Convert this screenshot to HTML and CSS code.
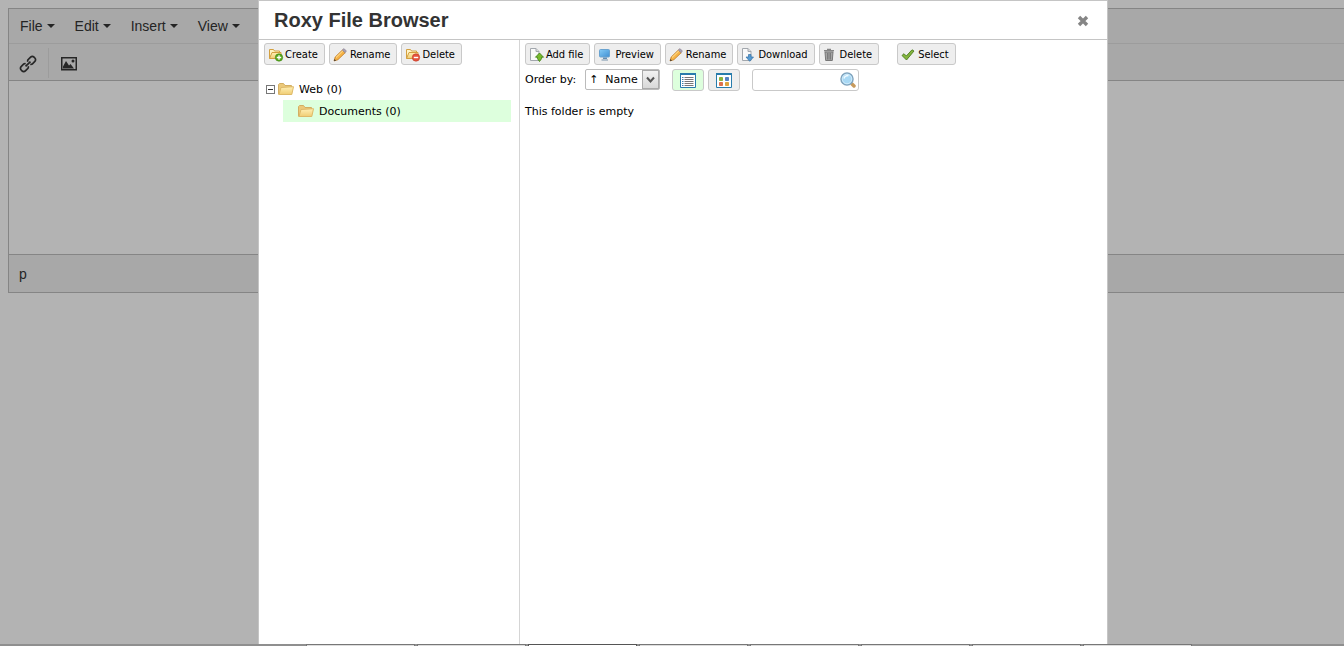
FILE: index.html
```html
<!DOCTYPE html>
<html lang="en">
<head>
<meta charset="utf-8">
<title>Roxy File Browser</title>
<link rel="stylesheet" href="styles.css">
</head>
<body>
<svg class="defs" aria-hidden="true">
  <defs>
    <linearGradient id="gold" x1="0" y1="0" x2="0" y2="1"><stop offset="0" stop-color="#fff0b5"/><stop offset="1" stop-color="#f0cd74"/></linearGradient>
    <linearGradient id="screen" x1="0" y1="0" x2="1" y2="1"><stop offset="0" stop-color="#84cbf6"/><stop offset="1" stop-color="#3f8fd3"/></linearGradient>
    <symbol id="folder-small" viewBox="0 0 16 16">
      <path d="M1.500 11.500V2.500h4l1 1.500h5v2" fill="#fff3c4" stroke="#d3a040"/>
      <path d="M1.500 11.500l2.500-6h9v6z" fill="url(#gold)" stroke="#d3a040"/>
    </symbol>
    <symbol id="folder-open" viewBox="0 0 16 14">
      <path d="M.5 12.500V2.500l1-1h4l1.500 2h6.500v3" fill="#ecc979" stroke="#d3ae62"/>
      <path d="M1 12.500l2-7 12.500-.8-1.700 7.800z" fill="url(#gold)" stroke="#deb968"/>
    </symbol>
    <symbol id="pencil" viewBox="0 0 14 14">
      <path d="M1 13l1.200-4L9.400 2l2.800 2.700-7.300 7z" fill="#f7b447" stroke="#bd7925" stroke-width=".8"/>
      <path d="M3 9.500l7-6.800" stroke="#ffe49b" stroke-width="1"/>
      <path d="M9.400 2L11 .6l2.400 2.400-1.200 1.700z" fill="#a9a2b8" stroke="#85788a" stroke-width=".6"/>
      <path d="M1 13l.6-2 1.400 1.400z" fill="#333"/>
    </symbol>
    <symbol id="page" viewBox="0 0 14 14">
      <path d="M1.500.5h5.500l3 3v9H1.500z" fill="#fafafa" stroke="#a2a7ad"/>
      <path d="M7 .5v3h3" fill="#ddd" stroke="#a2a7ad"/>
    </symbol>
  </defs>
</svg>

<main class="editor">
  <nav class="menubar">
    <button class="menu" type="button">File<span class="caret"></span></button>
    <button class="menu" type="button">Edit<span class="caret"></span></button>
    <button class="menu" type="button">Insert<span class="caret"></span></button>
    <button class="menu" type="button">View<span class="caret"></span></button>
  </nav>
  <div class="toolbar">
    <button class="tool" type="button" aria-label="Insert link">
      <svg width="18" height="18" viewBox="0 0 18 18" fill="none" stroke="#262626" stroke-width="1.700">
        <g transform="rotate(-45 9 9)"><path d="M7.500 7.200A2.300 2.300 0 0 0 6 6H2.300a2.400 2.400 0 0 0-2.400 2.400v1.200A2.400 2.400 0 0 0 2.300 12H6a2.300 2.300 0 0 0 1.500-1.200M10.500 7.200A2.300 2.300 0 0 1 12 6h3.700a2.400 2.400 0 0 1 2.400 2.400v1.200a2.400 2.400 0 0 1-2.400 2.400H12a2.300 2.300 0 0 1-1.500-1.200M5.500 9h7"/></g>
      </svg>
    </button>
    <button class="tool tool-split" type="button" aria-label="Insert image">
      <svg width="16" height="14" viewBox="0 0 16 14"><rect x=".75" y=".75" width="14.500" height="12" fill="none" stroke="#262626" stroke-width="1.500"/><path d="M2 11.500V9.500L5 4l3 4.500L9.500 7 13 11.500z" fill="#262626"/><circle cx="12" cy="4" r="1.500" fill="#262626"/></svg>
    </button>
  </div>
  <div class="canvas"></div>
  <div class="status">p</div>
</main>

<div class="overlay">
  <section class="dialog" role="dialog" aria-labelledby="dialog-title">
    <header class="dialog-head">
      <h1 id="dialog-title">Roxy File Browser</h1>
      <button class="close" type="button" aria-label="Close">
        <svg width="12" height="12" viewBox="0 0 12 12"><path d="M2 2l8 8M10 2l-8 8" stroke="#858585" stroke-width="3.400"/></svg>
      </button>
    </header>
    <div class="dialog-body">
      <aside class="folders">
        <div class="actions">
          <button class="btn" type="button"><svg width="16" height="16"><use href="#folder-small"/><circle cx="11" cy="10.500" r="3.700" fill="#58a71e" stroke="#3d8510" stroke-width=".6"/><path d="M11 8.300v4.400M8.800 10.500h4.400" stroke="#fff" stroke-width="1.300"/></svg>Create</button>
          <button class="btn btn-mid" type="button"><svg width="14" height="14"><use href="#pencil"/></svg>Rename</button>
          <button class="btn" type="button"><svg width="16" height="16"><use href="#folder-small"/><circle cx="11" cy="10.500" r="3.700" fill="#e6553d" stroke="#be3827" stroke-width=".6"/><path d="M8.800 10.500h4.400" stroke="#fff" stroke-width="1.400"/></svg>Delete</button>
        </div>
        <ul class="tree">
          <li>
            <div class="node">
              <button class="toggle" type="button" aria-label="Collapse Web"></button>
              <svg width="16" height="14"><use href="#folder-open"/></svg><span>Web (0)</span>
            </div>
            <ul class="branch">
              <li><div class="node node-child selected"><svg width="16" height="14"><use href="#folder-open"/></svg><span>Documents (0)</span></div></li>
            </ul>
          </li>
        </ul>
      </aside>
      <section class="files">
        <div class="actions">
          <button class="btn" type="button"><svg width="16" height="14"><use href="#page" width="14" height="14"/><path d="M10.500 5l4 4.200h-2v1.500l-2 2.800-2-2.800V9.200h-2z" fill="#79bb2c" stroke="#43831a" stroke-width=".9"/></svg>Add file</button>
          <button class="btn btn-mid" type="button"><svg width="14" height="14" viewBox="0 0 14 14"><rect x="1.500" y="1.500" width="10" height="7.500" rx="1" fill="url(#screen)" stroke="#6aa3d0"/><path d="M5 9.500h4v1.500H5z" fill="#648eb3"/><path d="M3.500 12h6.500" stroke="#9eb0c1" stroke-width="1.500"/></svg>Preview</button>
          <button class="btn btn-mid" type="button"><svg width="14" height="14"><use href="#pencil"/></svg>Rename</button>
          <button class="btn btn-mid" type="button"><svg width="14" height="14" viewBox="0 0 14 14"><use href="#page"/><path d="M7.500 6.500H10V9h2.500l-3.800 4.300L5 9h2.500z" fill="#559bd2" stroke="#3470a6" stroke-width=".7"/></svg>Download</button>
          <button class="btn btn-mid" type="button"><svg width="14" height="14" viewBox="0 0 14 14"><path d="M2 4h8l-.7 8.500H2.700z" fill="#a5a5a5" stroke="#777"/><path d="M1 2.800h10M4 1.500h4" stroke="#858585" stroke-width="1.400"/><path d="M4.500 5v6.500M6 5v6.500M7.500 5v6.500" stroke="#686868" stroke-width=".7"/></svg>Delete</button>
          <button class="btn btn-mid btn-last" type="button"><svg width="14" height="14" viewBox="0 0 14 14"><path d="M1 7.500l2-1.800L5.300 8 11 1.800 13 3 5.500 12z" fill="#83b43d" stroke="#4c7d20" stroke-width=".9"/></svg>Select</button>
        </div>
        <div class="filters">
          <label for="order">Order by:</label>
          <span class="picker">
            <select id="order"><option>↑&nbsp; Name</option><option>↓&nbsp; Name</option></select>
            <span class="drop"><svg width="9" height="8" viewBox="0 0 9 8"><path d="M1 1.500l3.500 4 3.500-4" fill="none" stroke="#555" stroke-width="2"/></svg></span>
          </span>
          <button class="btn view active" type="button" aria-label="List view"><svg width="16" height="15" viewBox="0 0 16 15"><path d="M.5.500h15v14H.5z" fill="#fff" stroke="#277cac"/><path d="M0 1h16" stroke="#277cac" stroke-width="2"/><path d="M2 4.500h1.500M2 6.500h1.500M2 8.500h1.500M2 10.500h1.500M2 12.500h1.500" stroke="#3b83ac"/><path d="M4.500 4.500h9M4.500 6.500h9M4.500 8.500h9M4.500 10.500h9M4.500 12.500h9" stroke="#777"/></svg></button>
          <button class="btn view" type="button" aria-label="Thumbnail view"><svg width="16" height="15" viewBox="0 0 16 15"><path d="M.5.500h15v14H.5z" fill="#fff" stroke="#277cac"/><path d="M0 1h16" stroke="#277cac" stroke-width="2"/><rect x="3" y="4" width="4" height="4" rx=".8" fill="#8bb33d"/><rect x="9" y="4" width="4" height="4" rx=".8" fill="#5581c1"/><rect x="3" y="9" width="4" height="4" rx=".8" fill="#dd714d"/><rect x="9" y="9" width="4" height="4" rx=".8" fill="#dda33d"/></svg></button>
          <span class="search">
            <input type="text" aria-label="Search files">
            <svg width="16" height="16" viewBox="0 0 16 16"><path d="M12 12l2 2" stroke="#c79a5c" stroke-width="3.500" stroke-linecap="round"/><circle cx="7" cy="7" r="6" fill="#a8d8f4" stroke="#7fa3bd" stroke-width="1.500"/><circle cx="7" cy="7" r="4.800" fill="none" stroke="#d9f0fc" stroke-width=".8"/><path d="M4 6.500c.5-2 2-3 4.500-3" fill="none" stroke="#f2fbff" stroke-width="1.500"/></svg>
          </span>
        </div>
        <p class="empty">This folder is empty</p>
      </section>
    </div>
  </section>
</div>
<footer class="tabs"><span></span><span></span><span class="current"></span><span></span><span></span><span></span><span></span><span></span></footer>
</body>
</html>
```
FILE: styles.css
```css
* { box-sizing: border-box; }
body {
  margin: 0;
  min-height: 100vh;
  display: flex;
  flex-direction: column;
  overflow: hidden;
  background: #b3b3b3;
  color: #000;
  font: 11px/14px "DejaVu Sans", Verdana, sans-serif;
}
button, input, select { font: inherit; color: inherit; margin: 0; }
svg { flex: none; display: block; }
.defs { position: absolute; width: 0; height: 0; }
ul { list-style: none; margin: 0; padding: 0; }

.editor {
  margin: 8px 0 0 8px;
  border: 1px solid #858585;
  border-right: 0;
  color: #242424;
  font: 14px/20px "Liberation Sans", Arial, sans-serif;
}
.menubar {
  display: flex;
  height: 35px;
  padding-left: 1px;
  background: #a8a8a8;
  border-bottom: 1px solid #9c9c9c;
}
.menu {
  display: flex;
  align-items: center;
  gap: 4px;
  padding: 0 10px;
  border: 0;
  background: none;
}
.caret { border: 4px solid transparent; border-top-color: #242424; border-bottom: 0; }
.toolbar {
  display: flex;
  height: 37px;
  padding: 4px 0 2px;
  background: #a8a8a8;
  border-bottom: 1px solid #858585;
}
.tool {
  display: flex;
  align-items: center;
  justify-content: center;
  width: 39px;
  padding: 1px 2px 0 0;
  border: 0;
  background: none;
}
.tool-split { width: 42px; border-left: 1px solid #9c9c9c; }
.canvas { height: 173px; }
.status {
  height: 38px;
  padding: 9px 10px;
  background: #a8a8a8;
  border-top: 1px solid #858585;
}

.overlay {
  position: absolute;
  inset: 0 0 2px;
  display: flex;
  justify-content: center;
  padding-left: 22px;
}
.dialog {
  display: flex;
  flex-direction: column;
  width: 850px;
  background: #fff;
  border: 1px solid #c5c5c5;
  border-bottom: 0;
}
.dialog-head {
  display: flex;
  align-items: center;
  justify-content: space-between;
  height: 39px;
  padding: 0 18px 0 15px;
  border-bottom: 1px solid #c5c5c5;
}
h1 {
  margin: 0;
  color: #333;
  font: bold 20px/28px "Liberation Sans", Arial, sans-serif;
}
.close { padding: 2px 0 0; border: 0; background: none; }
.dialog-body { flex: 1; display: flex; }
.folders { width: 261px; padding: 3px 8px 0 5px; border-right: 1px solid #d5d5d5; }
.files { flex: 1; padding: 3px 5px 0; }
.actions { display: flex; gap: 4px; }
.btn {
  display: flex;
  align-items: center;
  gap: 1px;
  height: 22px;
  padding: 2px 6px 0 3px;
  border: 1px solid #c9c9c9;
  border-radius: 3px;
  background: #eee;
  font-family: "DejaVu Sans Condensed", Tahoma, sans-serif;
  white-space: nowrap;
}
.btn-mid { gap: 3px; }
.btn-last { margin-left: 14px; }

.tree { padding: 13px 0 0 2px; }
.node { display: flex; align-items: center; gap: 5px; height: 22px; }
.node span { padding-top: 2px; }
.toggle {
  width: 9px;
  height: 9px;
  padding: 0;
  border: 1px solid #777;
  background: linear-gradient(#333, #333) center / 5px 1px no-repeat #fff;
}
.toggle + svg { margin-left: -2px; }
.branch { padding-left: 17px; }
.node-child { padding-left: 15px; }
.selected { background: #dfd; }

.filters { display: flex; align-items: center; padding-top: 4px; }
.picker { position: relative; align-self: flex-start; margin-left: 9px; }
.picker select {
  display: block;
  width: 75px;
  height: 21px;
  padding: 0 0 0 3px;
  border: 1px solid #bbb;
  border-radius: 2px;
  background: #fff;
  appearance: none;
}
.drop {
  position: absolute;
  inset: 1px 1px 1px auto;
  display: flex;
  align-items: center;
  justify-content: center;
  width: 17px;
  border: 1px solid #aaa;
  background: linear-gradient(#f2f2f2, #d8d8d8);
  pointer-events: none;
}
.view { width: 32px; justify-content: center; padding: 0; margin-left: 4px; }
.active { background: #dfd; margin-left: 12px; }
.search { position: relative; margin-left: 12px; }
.search input {
  display: block;
  width: 107px;
  height: 22px;
  padding: 0 22px 0 4px;
  border: 1px solid #c9c9c9;
  border-radius: 3px;
  background: #fff;
}
.search svg { position: absolute; top: 3px; right: 3px; }
.empty { margin: 14px 0 0; }

.tabs {
  display: flex;
  gap: 2px;
  height: 2px;
  margin-top: auto;
  padding-left: 306px;
  background: #8f8f8f;
}
.tabs span { width: 109px; border: 1px solid #777; border-bottom: 0; background: #ddd; }
.tabs .current { background: #fff; border-color: #555; }
```
